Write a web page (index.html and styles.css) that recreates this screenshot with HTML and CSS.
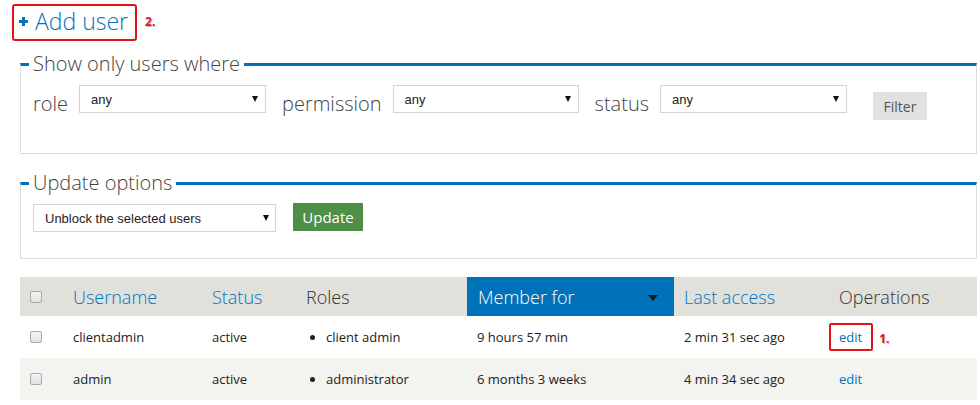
FILE: index.html
```html
<!DOCTYPE html>
<html>
<head>
<meta charset="utf-8">
<title>People</title>
<link rel="stylesheet" href="styles.css">
</head>
<body>
<div class="top">
  <a class="add-user" href="#"><svg class="plus" width="9" height="9" viewBox="0 0 9 9"><rect x="3" y="0" width="3" height="9" fill="#0074bd"/><rect x="0" y="3" width="9" height="3" fill="#0074bd"/></svg><span>Add user</span></a>
  <span class="note">2.</span>
</div>

<fieldset class="fs fs-filter">
  <legend>Show only users where</legend>
  <div class="row">
    <label class="lbl">role</label>
    <span class="sel w187"><select><option>any</option></select></span>
    <label class="lbl">permission</label>
    <span class="sel w186"><select><option>any</option></select></span>
    <label class="lbl">status</label>
    <span class="sel w187"><select><option>any</option></select></span>
    <button class="btn-filter">Filter</button>
  </div>
</fieldset>

<fieldset class="fs fs-update">
  <legend>Update options</legend>
  <div class="row">
    <span class="sel w243"><select><option>Unblock the selected users</option></select></span>
    <button class="btn-update">Update</button>
  </div>
</fieldset>

<table class="users">
  <colgroup>
    <col class="c-check"><col class="c-user"><col class="c-status"><col class="c-roles"><col class="c-member"><col class="c-access"><col class="c-ops">
  </colgroup>
  <thead>
    <tr>
      <th><input type="checkbox" class="cb"></th>
      <th class="link">Username</th>
      <th class="link">Status</th>
      <th>Roles</th>
      <th class="active"><div class="sort">Member for<span class="caret"></span></div></th>
      <th class="link">Last access</th>
      <th>Operations</th>
    </tr>
  </thead>
  <tbody>
    <tr>
      <td><input type="checkbox" class="cb"></td>
      <td>clientadmin</td>
      <td>active</td>
      <td><ul class="roles"><li>client admin</li></ul></td>
      <td class="member">9 hours 57 min</td>
      <td>2 min 31 sec ago</td>
      <td><a class="edit boxed" href="#">edit</a><span class="note note1">1.</span></td>
    </tr>
    <tr class="even">
      <td><input type="checkbox" class="cb"></td>
      <td>admin</td>
      <td>active</td>
      <td><ul class="roles"><li>administrator</li></ul></td>
      <td class="member">6 months 3 weeks</td>
      <td>4 min 34 sec ago</td>
      <td><a class="edit" href="#">edit</a></td>
    </tr>
  </tbody>
</table>
</body>
</html>
```
FILE: styles.css
```css
html, body {
  margin: 0;
  padding: 0;
  background: #fff;
  font-family: "Open Sans", "Liberation Sans", sans-serif;
  color: #333;
}

.top {
  display: flex;
  align-items: flex-start;
  padding: 4px 0 0 12px;
}

.add-user {
  display: flex;
  align-items: center;
  border: 2px solid #e3121b;
  border-radius: 3px;
  padding: 2px 7px 4px 5px;
  text-decoration: none;
  color: #0074bd;
  font-weight: 300;
  font-size: 23px;
  line-height: 27px;
  height: 27px;
  box-sizing: content-box;
}
.add-user .plus {
  margin-right: 7px;
  margin-top: 0;
}

.note {
  color: #e3121b;
  font-weight: 700;
  font-size: 12px;
  text-shadow: 1px 1px 1px rgba(0,0,0,0.25);
  margin: 9px 0 0 8px;
}

.fs {
  box-sizing: border-box;
  width: 957px;
  margin: 11px 0 0 20px;
  border: 1px solid #dcdcdc;
  border-top: 3px solid #0071b8;
  padding: 9px 12px 30px 12px;
  min-width: 0;
}
.fs legend {
  font-size: 20px;
  line-height: 24px;
  font-weight: 300;
  color: #444;
  padding: 0 4px;
  margin-left: -4px;
}
.fs-update {
  margin-top: 17px;
  padding-bottom: 26px;
}

.row {
  display: flex;
  align-items: flex-start;
}

.lbl {
  font-size: 20px;
  font-weight: 300;
  line-height: 38px;
  color: #444;
  margin-right: 11px;
}

.sel {
  position: relative;
  display: block;
  height: 28px;
  margin-right: 16px;
}
.sel.w187 { width: 187px; }
.sel.w186 { width: 186px; }
.sel.w243 { width: 243px; }
.sel select {
  -webkit-appearance: none;
  appearance: none;
  box-sizing: border-box;
  width: 100%;
  height: 28px;
  border: 1px solid #d4d4d4;
  border-radius: 0;
  background: #fff;
  padding: 0 20px 0 11px;
  font-family: "Liberation Sans", Arial, sans-serif;
  font-size: 13px;
  color: #222;
  outline: none;
}
.sel::after {
  content: "";
  position: absolute;
  right: 8px;
  top: 11px;
  width: 0;
  height: 0;
  border-left: 3.5px solid transparent;
  border-right: 3.5px solid transparent;
  border-top: 6px solid #111;
  pointer-events: none;
}
.fs-update .sel::after { right: 7px; }

.btn-filter {
  margin: 7px 0 0 10px;
  height: 28px;
  width: 54px;
  border: 0;
  background: #e1e1e1;
  color: #555;
  font-family: "Open Sans", sans-serif;
  font-size: 14px;
  padding: 0;
}
.btn-update {
  margin: -1px 0 0 1px;
  height: 28px;
  width: 70px;
  border: 0;
  background: #4d8f46;
  color: #fff;
  font-family: "Open Sans", sans-serif;
  font-size: 15px;
  padding: 0;
}

.users {
  width: 957px;
  margin: 18px 0 0 20px;
  border-collapse: collapse;
  table-layout: fixed;
}
.c-check { width: 43px; }
.c-user { width: 139px; }
.c-status { width: 94px; }
.c-roles { width: 171px; }
.c-member { width: 207px; }
.c-access { width: 155px; }
.c-ops { width: 148px; }

.users th {
  background: #e1e1dc;
  height: 39px;
  padding: 0 10px;
  text-align: left;
  font-weight: 300;
  font-size: 18px;
  color: #333;
  vertical-align: middle;
}
.users th.link { color: #0074bd; }
.users th.active {
  background: #0072b9;
  color: #fff;
  padding: 0 16px 0 11px;
}
.sort {
  display: flex;
  align-items: center;
  justify-content: space-between;
}
.caret {
  width: 0;
  height: 0;
  border-left: 5px solid transparent;
  border-right: 5px solid transparent;
  border-top: 6px solid #1a1a1a;
  margin-top: 2px;
}

.users td {
  height: 42px;
  padding: 0 10px;
  font-size: 13px;
  color: #222;
  vertical-align: middle;
  white-space: nowrap;
}
.users tr.even td { background: #f3f3ef; }

.cb {
  -webkit-appearance: none;
  appearance: none;
  display: block;
  margin: 0;
  width: 12px;
  height: 12px;
  border: 1px solid #a9a9a9;
  border-radius: 2px;
  background: linear-gradient(#f4f4f4, #e2e2e2);
  box-sizing: border-box;
}

.roles {
  margin: 0;
  padding: 0 0 0 20px;
  list-style: disc;
}

.edit {
  color: #0074bd;
  text-decoration: none;
}
.edit.boxed {
  display: inline-block;
  margin-left: -10px;
  border: 2px solid #e3121b;
  border-radius: 2px;
  padding: 0 9px 0 8px;
  line-height: 24px;
}
.note1 {
  margin: 0 0 0 6px;
  vertical-align: middle;
}
```
